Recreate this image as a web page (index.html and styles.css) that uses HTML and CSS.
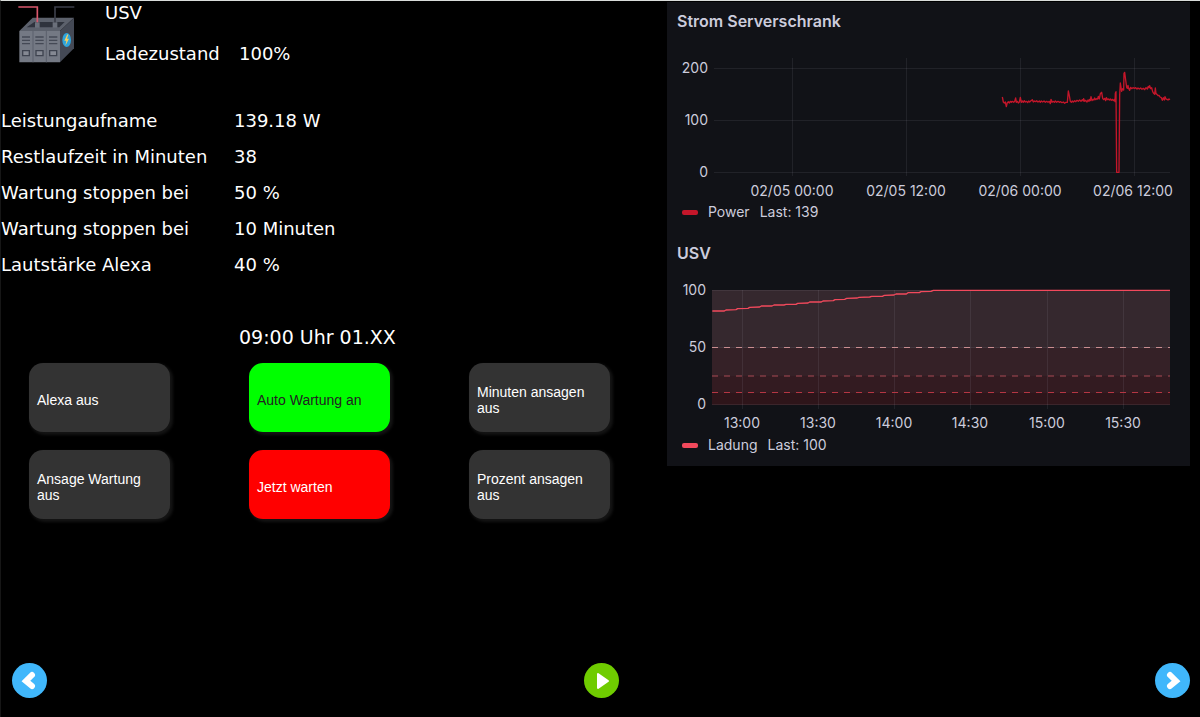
FILE: index.html
```html
<!DOCTYPE html>
<html lang="de">
<head>
<meta charset="utf-8">
<meta name="viewport" content="width=device-width, initial-scale=1">
<title>USV</title>
<link rel="stylesheet" href="styles.css">
</head>
<body class="page">
<main class="dashboard">
  <section class="status">
    <header class="device">
      <svg class="device-icon" viewBox="54 14 174 176" aria-hidden="true">
        <path fill="#5c616c" d="M58 92 98 52H222L180 92Z"/>
        <path fill="#2f333d" d="M80 81 103 65H194L178 81Z"/>
        <path fill="#444955" d="M180 92 222 52V144L180 186Z"/>
        <path fill="#747984" d="M58 92H180V186H58Z"/>
        <path stroke="#5b606c" stroke-width="3" d="M99 92V186M139 92V186"/>
        <path stroke="#444955" stroke-width="4" d="M66 110H90M66 120H90M66 130H90M106 110H131M106 120H131M106 130H131M147 110H172M147 120H172M147 130H172"/>
        <path fill="#858993" stroke="#3e434f" stroke-width="4" d="M68 151H88V166H68ZM108 151H129V166H108ZM149 151H170V166H149Z"/>
        <path fill="#6b707b" d="M105 66H119V82H105ZM158 66H172V82H158Z"/>
        <path fill="none" stroke="#d9576c" stroke-width="5" d="M55 20H112V66"/>
        <path fill="none" stroke="#3b3e49" stroke-width="5" d="M223 20H165V66"/>
        <ellipse cx="200" cy="119" rx="13" ry="21" fill="#2ea4dc"/>
        <path fill="#f8cf5d" d="M202 102 193 121H199L196 136 207 115H201L205 103Z"/>
      </svg>
      <h1 class="device-name">USV</h1>
      <span class="charge-label">Ladezustand</span>
      <span class="charge-value">100%</span>
    </header>
    <dl class="readings">
      <dt>Leistungaufname</dt><dd>139.18 W</dd>
      <dt>Restlaufzeit in Minuten</dt><dd>38</dd>
      <dt>Wartung stoppen bei</dt><dd>50 %</dd>
      <dt>Wartung stoppen bei</dt><dd>10 Minuten</dd>
      <dt>Lautstärke Alexa</dt><dd>40 %</dd>
    </dl>
    <p class="schedule">09:00 Uhr 01.XX</p>
    <div class="actions">
      <button class="action" type="button">Alexa aus</button>
      <button class="action action-on" type="button">Auto Wartung an</button>
      <button class="action" type="button">Minuten ansagen aus</button>
      <button class="action" type="button">Ansage Wartung aus</button>
      <button class="action action-alert" type="button">Jetzt warten</button>
      <button class="action" type="button">Prozent ansagen aus</button>
    </div>
  </section>

  <aside class="charts">
    <section class="chart">
      <h2 class="chart-title">Strom Serverschrank</h2>
      <svg class="plot" viewBox="667 44 523 157" role="img" aria-label="Strom Serverschrank">
        <path class="grid-line" d="M714 68.500H1170M714 120.500H1170M714 172.500H1170M792.500 58V176M906.500 58V176M1020.500 58V176M1134.500 58V176"/>
        <g class="tick tick-y"><text x="708" y="73">200</text><text x="708" y="125">100</text><text x="708" y="177">0</text></g>
        <g class="tick tick-x"><text x="792" y="196">02/05 00:00</text><text x="906" y="196">02/05 12:00</text><text x="1020" y="196">02/06 00:00</text><text x="1133" y="196">02/06 12:00</text></g>
        <g transform="translate(930 40) scale(.33333)">
          <path class="line line-power" d="M217 171 220 186 223 189 226 186 229 200 232 188 235 185 238 189 241 184 244 187 247 184 251 187 254 184 257 174 259 187 262 184 265 189 268 186 271 172 274 187 277 183 280 187 283 182 286 186 290 184 293 188 296 183 299 186 303 182 307 179 310 186 313 183 317 185 320 182 324 186 328 183 331 187 334 183 338 186 342 183 346 187 350 184 354 187 358 184 361 191 363 178 366 187 369 184 373 187 376 183 380 187 384 184 388 187 392 185 396 188 400 186 404 190 408 187 412 187 415 153 418 167 421 184 424 187 427 183 430 186 434 182 437 185 441 181 445 184 449 180 453 184 457 179 460 183 461 176 464 184 467 181 471 186 474 180 477 184 479 178 481 182 483 170 486 182 489 178 492 180 494 174 497 179 500 176 503 177 505 169 508 177 511 161 515 157 518 175 521 179 524 175 527 182 529 173 532 179 535 177 538 180 541 177 544 181 547 178 550 182 553 178 555 185 556 160 558 155 560 397H567L569 165 571 129 575 154 578 146 581 150 582 100 584 97 587 120 590 142 592 145 594 136 596 145 599 151 602 142 605 146 609 143 613 145 617 143 621 147 624 144 628 147 632 144 636 148 640 145 644 149 648 143 652 147 655 139 657 143 659 137 662 146 665 143 668 155 671 160 674 163 676 144 678 161 681 163 684 167 687 166 690 171 694 173 697 181 700 173 703 180 705 170 708 177 711 178 714 180 717 177 720 179"/>
        </g>
      </svg>
      <p class="legend"><span class="swatch swatch-power"></span><span>Power</span><span>Last: 139</span></p>
    </section>
    <section class="chart">
      <h2 class="chart-title">USV</h2>
      <svg class="plot" viewBox="667 276 523 158" role="img" aria-label="USV Ladung">
        <path fill="#35282e" d="M712 290H1170V348H712Z"/>
        <path fill="#352127" d="M712 348H1170V376H712Z"/>
        <path fill="#331b21" d="M712 376H1170V393H712Z"/>
        <path fill="#2e151a" d="M712 393H1170V405H712Z"/>
        <path class="grid-line" d="M712 290.500H1170M712 347.500H1170M712 404.500H1170M742.500 290V409M818.500 290V409M894.500 290V409M970.500 290V409M1047.500 290V409M1123.500 290V409"/>
        <g class="threshold"><path stroke="#c98d90" d="M712 347.500H1170"/><path stroke="#a84a55" d="M712 376H1170"/><path stroke="#b53643" d="M712 392.500H1170"/></g>
        <g transform="translate(660 235) scale(.33333)">
          <path class="line line-charge" d="M157 228H193L198 225 228 224 233 221 264 220 269 217 299 216 304 213 336 213 342 210 372 210 378 208 408 208 413 205 444 204 449 201 484 201 489 198 520 197 525 194 554 193 560 190 592 189 597 187 629 186 635 184 667 184 673 181 702 180 708 177 739 177 744 173 778 173 783 170 813 169 820 166H1530"/>
        </g>
        <g class="tick tick-y"><text x="706" y="295">100</text><text x="706" y="352">50</text><text x="706" y="409">0</text></g>
        <g class="tick tick-x"><text x="742" y="428">13:00</text><text x="818" y="428">13:30</text><text x="894" y="428">14:00</text><text x="970" y="428">14:30</text><text x="1047" y="428">15:00</text><text x="1123" y="428">15:30</text></g>
      </svg>
      <p class="legend"><span class="swatch swatch-charge"></span><span>Ladung</span><span>Last: 100</span></p>
    </section>
  </aside>
</main>
<nav class="pager" aria-label="Ansichten">
  <button class="round" type="button" aria-label="Zurück"><svg viewBox="0 0 35 35"><path class="chevron" d="M20 12 14 18 20 23"/></svg></button>
  <button class="round round-play" type="button" aria-label="Start"><svg viewBox="0 0 35 35"><path class="play" d="M14 11 24 18 14 25Z"/></svg></button>
  <button class="round" type="button" aria-label="Weiter"><svg viewBox="0 0 35 35"><path class="chevron" d="M15 12 21 18 15 23"/></svg></button>
</nav>
</body>
</html>
```
FILE: styles.css
```css
* { box-sizing: border-box; }

.page {
  margin: 0;
  min-height: 100vh;
  display: flex;
  flex-direction: column;
  background: #000;
  color: #fff;
  border-top: 1px solid #d9dcda;
  border-left: 1px solid #161616;
  font: 18px/36px "DejaVu Sans", Verdana, sans-serif;
}

.dashboard {
  display: grid;
  grid-template-columns: 666fr 523fr;
  align-items: start;
  padding-right: 10px;
}

.device {
  display: grid;
  grid-template-columns: 104px 134px 1fr;
  grid-template-rows: 24px 56px;
}
.device-icon {
  grid-row: 1 / 3;
  width: 58px;
  margin: 4px 0 0 17px;
}
.device-name {
  grid-column: 2 / 4;
  margin: 0;
  font-size: 18px;
  font-weight: 400;
  line-height: 24px;
}
.charge-label, .charge-value { line-height: 58px; }

.readings {
  display: grid;
  grid-template-columns: 233px 1fr;
  margin: 22px 0 0;
}
.readings dd { margin: 0; }

.schedule {
  margin: 36px 0 8px 238px;
  font-size: 19px;
}

.actions {
  display: grid;
  grid-template-columns: repeat(3, 1fr);
  gap: 18px 79px;
  padding: 0 57px 0 28px;
}
.action {
  height: 69px;
  padding: 5px 8px 0;
  border: 0;
  border-radius: 14px;
  background: #333;
  color: #fff;
  box-shadow: 2px 2px 3px 1px #141414;
  font: 14px/16px "Liberation Sans", Arial, sans-serif;
  text-align: left;
}
.action-on { background: #0f0; color: #222; }
.action-alert { background: #f00; }

.charts {
  margin-top: 1px;
  padding-bottom: 10px;
  background: #111217;
  color: #ccccdc;
  font: 14px/22px Inter, sans-serif;
}
.chart-title {
  margin: 0;
  padding: 8px 10px 12px;
  font-size: 16px;
  font-weight: 600;
  line-height: 22px;
}
.plot { display: block; width: 100%; }
.grid-line { fill: none; stroke: #ccccdc; stroke-opacity: .09; }
.tick { fill: #ccccdc; font-size: 14px; }
.tick-y { text-anchor: end; }
.tick-x { text-anchor: middle; }
.line { fill: none; stroke-linejoin: round; }
.line-power { stroke: #c4162a; stroke-width: 4; }
.line-charge { stroke: #f2495c; stroke-width: 4; }
.threshold { fill: none; stroke-dasharray: 6 6; }
.legend {
  display: flex;
  align-items: center;
  gap: 10px;
  height: 22px;
  margin: 0;
  padding-left: 15px;
}
.chart + .chart { margin-top: 11px; }
.swatch { width: 16px; height: 5px; border-radius: 2px; }
.swatch-power { background: #c4162a; }
.swatch-charge { background: #f2495c; }

.pager {
  display: flex;
  justify-content: space-between;
  margin-top: auto;
  padding: 16px 10px 19px 11px;
}
.round {
  width: 35px;
  height: 35px;
  padding: 0;
  border: 0;
  border-radius: 50%;
  background: #40b7fb;
}
.round svg { display: block; width: 100%; }
.round-play { background: #6fcc00; }
.chevron {
  fill: none;
  stroke: #fff;
  stroke-width: 6;
  stroke-linecap: round;
  stroke-linejoin: miter;
}
.play { fill: #fff; stroke: #fff; stroke-width: 2; stroke-linejoin: round; }
```
